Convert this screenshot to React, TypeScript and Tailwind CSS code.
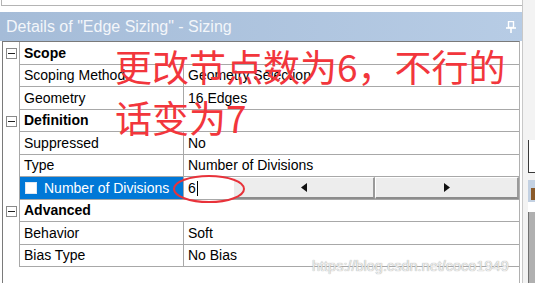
import React from "react";

type Row =
  | { kind: "cat"; label: string }
  | { kind: "prop"; label: string; value: string }
  | { kind: "sel"; label: string; value: string };

const rows: Row[] = [
  { kind: "cat", label: "Scope" },
  { kind: "prop", label: "Scoping Method", value: "Geometry Selection" },
  { kind: "prop", label: "Geometry", value: "16 Edges" },
  { kind: "cat", label: "Definition" },
  { kind: "prop", label: "Suppressed", value: "No" },
  { kind: "prop", label: "Type", value: "Number of Divisions" },
  { kind: "sel", label: "Number of Divisions", value: "6" },
  { kind: "cat", label: "Advanced" },
  { kind: "prop", label: "Behavior", value: "Soft" },
  { kind: "prop", label: "Bias Type", value: "No Bias" },
];

function MinusBox() {
  return (
    <div className="ml-[3px] flex h-[11px] w-[11px] items-center justify-center border border-[#8a8a8a] bg-white">
      <div className="h-[1px] w-[7px] bg-[#222]" />
    </div>
  );
}

function Pin() {
  return (
    <svg width="12" height="12" viewBox="0 0 12 12" className="mr-[5px]">
      <rect x="3.5" y="0.5" width="5" height="6" fill="none" stroke="#ffffff" strokeWidth="1.4" />
      <line x1="1" y1="7" x2="11" y2="7" stroke="#ffffff" strokeWidth="1.6" />
      <line x1="6" y1="7" x2="6" y2="12" stroke="#ffffff" strokeWidth="1.6" />
    </svg>
  );
}

function TableRow({ row, idx }: { row: Row; idx: number }) {
  const h = idx % 2 === 0 ? "h-[23px]" : "h-[22px]";
  return (
    <div className={`flex ${h}`}>
      <div className="flex w-[16px] items-center">{row.kind === "cat" ? <MinusBox /> : null}</div>
      <div className="flex flex-1 border-b border-l border-[#a8a8a8]">
        {row.kind === "cat" ? (
          <div className="flex items-center pl-[4px] font-bold text-black">{row.label}</div>
        ) : row.kind === "prop" ? (
          <>
            <div className="flex w-[164px] items-center overflow-hidden whitespace-nowrap border-r border-[#a8a8a8] pl-[4px] text-black">
              {row.label}
            </div>
            <div className="flex flex-1 items-center overflow-hidden whitespace-nowrap pl-[4px] text-black">
              {row.value}
            </div>
          </>
        ) : (
          <>
            <div className="flex w-[164px] items-center overflow-hidden whitespace-nowrap border-r border-[#a8a8a8] bg-[#0078d7] pl-[5px] text-white">
              <div className="mr-[7px] h-[12px] w-[12px] shrink-0 border border-[#dfe8f3] bg-white" />
              <span>{row.label}</span>
            </div>
            <div className="flex flex-1">
              <div className="flex w-[49px] items-center bg-white pl-[4px] text-black">
                <span>{row.value}</span>
                <div className="ml-[1px] h-[15px] w-[1px] bg-black" />
              </div>
              <div className="flex w-[142px] items-center justify-center border-b-2 border-l border-r-2 border-t border-b-[#8c8c8c] border-l-white border-r-[#9a9a9a] border-t-white bg-[#ededed]">
                <svg width="6" height="9" viewBox="0 0 6 9">
                  <polygon points="6,0 0,4.5 6,9" fill="#111" />
                </svg>
              </div>
              <div className="flex flex-1 items-center justify-center border-b-2 border-l border-r-2 border-t border-b-[#8c8c8c] border-l-white border-r-[#9a9a9a] border-t-white bg-[#ededed]">
                <svg width="6" height="9" viewBox="0 0 6 9">
                  <polygon points="0,0 6,4.5 0,9" fill="#111" />
                </svg>
              </div>
            </div>
          </>
        )}
      </div>
    </div>
  );
}

export default function App() {
  return (
    <div
      className="relative flex h-[283px] w-[535px] overflow-hidden bg-white text-[14px]"
      style={{ fontFamily: '"Liberation Sans", Arial, sans-serif' }}
    >
      {/* main panel */}
      <div className="flex w-[522px] flex-col">
        <div className="ml-[1px] h-[6px] border-b border-l border-[#b4b4b4] bg-white" />
        <div className="h-[6px] bg-white" />
        <div className="flex h-[29px] items-center justify-between bg-gradient-to-r from-[#a5bcd8] to-[#b7cce5] pl-[6px]">
          <span className="text-[16px] text-[#f3f6fa]">Details of "Edge Sizing" - Sizing</span>
          <Pin />
        </div>
        <div className="ml-[2px] flex w-[518px] flex-1 flex-col border-l border-r border-t border-[#7a7a7a] border-r-[#b0b0b0] bg-white">
          {rows.map((r, i) => (
            <TableRow key={i} row={r} idx={i} />
          ))}
        </div>
      </div>

      {/* right strip: neighbouring window */}
      <div className="flex flex-1 flex-col border-l border-[#c8c8c8] bg-[#f3f3f3]">
        <div className="h-[140px]" />
        <div className="ml-[5px] h-[33px] border-b border-l border-[#3a3a3a] bg-white" />
        <div className="h-[7px]" />
        <div className="ml-[5px] flex h-[22px] items-start bg-[#c3d1e2] pl-[3px] pt-[8px]">
          <div className="h-[12px] w-[4px] bg-[#8a5a2a]" />
        </div>
        <div className="ml-[5px] h-[10px] bg-white" />
        <div className="ml-[5px] flex-1 border-l border-[#707070] bg-[#b0b0b0]" />
      </div>

      {/* red annotation */}
      <div
        className="absolute left-[115px] top-[41px] whitespace-nowrap text-[37px] leading-[51px] text-[#f2363c]"
        style={{ fontFamily: '"Noto Sans CJK SC", "Noto Sans", sans-serif' }}
      >
        <div>更改节点数为6，不行的</div>
        <div>话变为7</div>
      </div>
      <svg className="absolute left-[172px] top-[174px]" width="74" height="30" viewBox="0 0 74 30">
        <ellipse cx="37" cy="15" rx="35" ry="13" fill="none" stroke="#e8323a" strokeWidth="2" />
      </svg>

      {/* watermark */}
      <div className="absolute left-[312px] top-[256px] whitespace-nowrap text-[14.5px] text-[#ececec] [text-shadow:0_0_1px_#8a8a8a]">
        https://blog.csdn.net/coco1949
      </div>
    </div>
  );
}
